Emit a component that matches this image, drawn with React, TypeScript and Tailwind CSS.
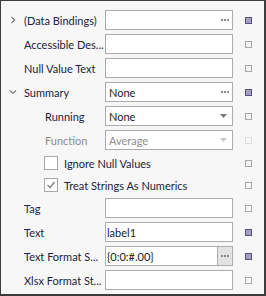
import React from 'react';

type Marker = 'set' | 'empty' | 'faint';

function Square({ kind }: { kind: Marker }) {
    if (kind === 'set') {
        return <div className="w-[7px] h-[7px] border border-[#5b5089] bg-[#a59fc4]" />;
    }
    if (kind === 'faint') {
        return <div className="w-[7px] h-[7px] border border-[#dedede]" />;
    }
    return <div className="w-[7px] h-[7px] border border-[#a8a8a8]" />;
}

function Dots() {
    return (
        <div className="flex gap-[1px]">
            <span className="w-[2px] h-[2px] bg-[#8a8a8a]" />
            <span className="w-[2px] h-[2px] bg-[#8a8a8a]" />
            <span className="w-[2px] h-[2px] bg-[#8a8a8a]" />
        </div>
    );
}

function Caret({ color }: { color: string }) {
    return (
        <svg width="7" height="4" viewBox="0 0 7 4">
            <path d="M0 0 H7 L3.5 4 Z" fill={color} />
        </svg>
    );
}

function Chevron({ open }: { open?: boolean }) {
    return (
        <svg width="8" height="8" viewBox="0 0 8 8" className="shrink-0">
            {open ? (
                <path d="M1 2.5 L4 5.5 L7 2.5" fill="none" stroke="#7a7a7a" strokeWidth="1.2" />
            ) : (
                <path d="M2.5 1 L5.5 4 L2.5 7" fill="none" stroke="#7a7a7a" strokeWidth="1.2" />
            )}
        </svg>
    );
}

function Row({
    label,
    indent = 0,
    chevron,
    disabled,
    marker,
    children,
}: {
    label: string;
    indent?: number;
    chevron?: 'open' | 'closed';
    disabled?: boolean;
    marker: Marker;
    children: React.ReactNode;
}) {
    return (
        <div className="flex items-center h-[24px]">
            <div className="w-[104px] flex items-center">
                <div className={indent ? 'w-[44px] shrink-0' : 'w-[23px] shrink-0 flex justify-end pr-[7px]'}>
                    {chevron && <Chevron open={chevron === 'open'} />}
                </div>
                <span className={`whitespace-nowrap ${disabled ? 'text-[#8c8c8c]' : 'text-[#22223a]'}`}>{label}</span>
            </div>
            <div className="w-[128px] h-[20px]">{children}</div>
            <div className="flex-1 flex justify-center">
                <Square kind={marker} />
            </div>
        </div>
    );
}

function Box({ text, dots, combo, pad, disabled }: { text?: string; dots?: boolean; combo?: boolean; pad?: boolean; disabled?: boolean }) {
    return (
        <div className="h-full flex items-center border border-[#acacac] bg-white">
            <span className={`flex-1 whitespace-nowrap ${combo || pad ? 'pl-[3px]' : 'pl-[1px]'} ${disabled ? 'text-[#8c8c8c]' : 'text-[#1a1a1a]'}`}>
                {text}
            </span>
            {dots && (
                <div className="pr-[3px]">
                    <Dots />
                </div>
            )}
            {combo && (
                <div className="pr-[5px] pb-[1px]">
                    <Caret color={disabled ? '#c8c8c8' : '#7a7a7a'} />
                </div>
            )}
        </div>
    );
}

function CheckRow({ label, checked }: { label: string; checked?: boolean }) {
    return (
        <div className="flex items-center h-[22px]">
            <div className="w-[232px] flex items-center pl-[43px]">
                <div className="w-[14px] h-[14px] border border-[#a8a8a8] bg-white flex items-center justify-center">
                    {checked && (
                        <svg width="10" height="10" viewBox="0 0 10 10">
                            <path d="M1.5 5 L4 7.5 L8.5 2" fill="none" stroke="#7c7c7c" strokeWidth="1.2" />
                        </svg>
                    )}
                </div>
                <span className="ml-[6px] whitespace-nowrap text-[#22223a]">{label}</span>
            </div>
            <div className="flex-1 flex justify-center">
                <Square kind="empty" />
            </div>
        </div>
    );
}

export default function App() {
    return (
        <div
            className="w-[266px] h-[296px] bg-[#f7f7f7] border-t border-l border-r-2 border-b-2 border-[#3c3c3c] pt-[7px] text-[11px] leading-none"
            style={{ fontFamily: 'Lato, "Noto Sans", sans-serif' }}
        >
            <Row label="(Data Bindings)" chevron="closed" marker="set">
                <Box dots />
            </Row>
            <Row label="Accessible Des..." marker="empty">
                <Box />
            </Row>
            <Row label="Null Value Text" marker="empty">
                <Box />
            </Row>
            <Row label="Summary" chevron="open" marker="set">
                <Box text="None" dots pad />
            </Row>
            <Row label="Running" indent={1} marker="empty">
                <Box text="None" combo />
            </Row>
            <Row label="Function" indent={1} disabled marker="faint">
                <Box text="Average" combo disabled />
            </Row>
            <CheckRow label="Ignore Null Values" />
            <CheckRow label="Treat Strings As Numerics" checked />
            <Row label="Tag" marker="empty">
                <Box />
            </Row>
            <Row label="Text" marker="set">
                <Box text="label1" />
            </Row>
            <Row label="Text Format S..." marker="set">
                <div className="h-full flex border border-[#acacac] bg-white">
                    <span className="flex-1 flex items-center pl-[1px] text-[#1a1a1a] whitespace-nowrap">{'{0:0:#.00}'}</span>
                    <div className="w-[15px] flex items-center justify-center border-l border-[#acacac] bg-[#e3e3e3]">
                        <Dots />
                    </div>
                </div>
            </Row>
            <Row label="Xlsx Format St..." marker="empty">
                <Box />
            </Row>
        </div>
    );
}
